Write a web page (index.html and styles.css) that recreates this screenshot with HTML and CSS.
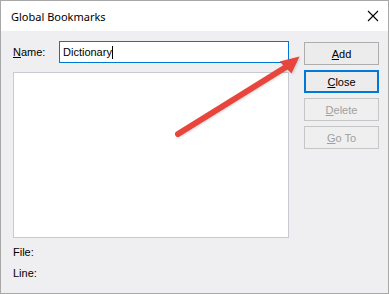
FILE: index.html
```html
<!DOCTYPE html>
<html lang="en">
<head>
<meta charset="UTF-8">
<title>Global Bookmarks</title>
<link rel="stylesheet" href="styles.css">
</head>
<body>
<div class="window">
  <div class="titlebar">
    <span class="title">Global Bookmarks</span>
    <svg class="close-x" width="12" height="12" viewBox="0 0 12 12">
      <path d="M1 1 L11 11 M11 1 L1 11" stroke="#000" stroke-width="1.1" fill="none"/>
    </svg>
  </div>
  <div class="content">
    <div class="left-col">
      <div class="name-row">
        <label class="field-label" for="bmName"><u>N</u>ame:</label>
        <div class="name-box" id="bmName">Dictionary<span class="caret"></span></div>
      </div>
      <div class="bookmark-list"></div>
      <div class="info-line">File:</div>
      <div class="info-line">Line:</div>
    </div>
    <div class="btn-col">
      <button type="button" class="dlg-btn"><u>A</u>dd</button>
      <button type="button" class="dlg-btn default"><u>C</u>lose</button>
      <button type="button" class="dlg-btn" disabled><u>D</u>elete</button>
      <button type="button" class="dlg-btn" disabled><u>G</u>o To</button>
    </div>
  </div>

  <!-- annotation arrow drawn on top of the dialog -->
  <svg class="arrow" width="389" height="294" viewBox="0 0 389 294">
    <line x1="178" y1="134" x2="286" y2="67" stroke="#e8453c" stroke-width="6" stroke-linecap="round"/>
    <polygon points="299.5,56.5 279.5,61.5 291.5,73.5" fill="#e8453c"/>
  </svg>
</div>
</body>
</html>
```

FILE: styles.css
```css
body {
    margin: 0;
    background: #fff;
    font-family: "Liberation Sans", Arial, sans-serif;
}

.window {
    position: relative;
    width: 389px;
    height: 294px;
    box-sizing: border-box;
    border: 1px solid #a8a8a8;
    background: #efeff1;
    display: flex;
    flex-direction: column;
}

.titlebar {
    height: 30px;
    background: #fff;
    display: flex;
    align-items: center;
    justify-content: space-between;
    padding: 0 9px 0 10px;
}

.title {
    font-family: "Noto Sans", sans-serif;
    font-size: 11px;
    color: #000;
}

.content {
    flex: 1;
    display: flex;
    padding: 10px 0 0 12px;
    font-size: 11px;
    color: #000;
}

.left-col {
    width: 276px;
}

.name-row {
    display: flex;
    align-items: center;
}

.field-label {
    width: 46px;
}

.name-box {
    width: 230px;
    height: 22px;
    box-sizing: border-box;
    border: 1px solid #0078d7;
    background: #fff;
    padding-left: 3px;
    display: flex;
    align-items: center;
}

.caret {
    display: inline-block;
    width: 1px;
    height: 13px;
    background: #000;
}

.bookmark-list {
    margin-top: 9px;
    height: 166px;
    box-sizing: border-box;
    border: 1px solid #c9c9d2;
    background: #fff;
}

.info-line {
    margin-top: 8px;
    height: 13px;
    line-height: 13px;
}

.btn-col {
    margin-left: 15px;
    padding-top: 1px;
    display: flex;
    flex-direction: column;
    gap: 5px;
}

.dlg-btn {
    width: 75px;
    height: 23px;
    box-sizing: border-box;
    border: 1px solid #adadad;
    background: #ececec;
    font-family: "Liberation Sans", Arial, sans-serif;
    font-size: 11px;
    color: #000;
    padding: 0;
}

.dlg-btn.default {
    border: 2px solid #0078d7;
}

.dlg-btn:disabled {
    color: #a0a0a0;
    border-color: #c6c6c6;
    background: #efefef;
}

.arrow {
    position: absolute;
    left: -1px;
    top: -1px;
    pointer-events: none;
    filter: drop-shadow(1px 1px 1px rgba(0, 0, 0, 0.15));
}
```
